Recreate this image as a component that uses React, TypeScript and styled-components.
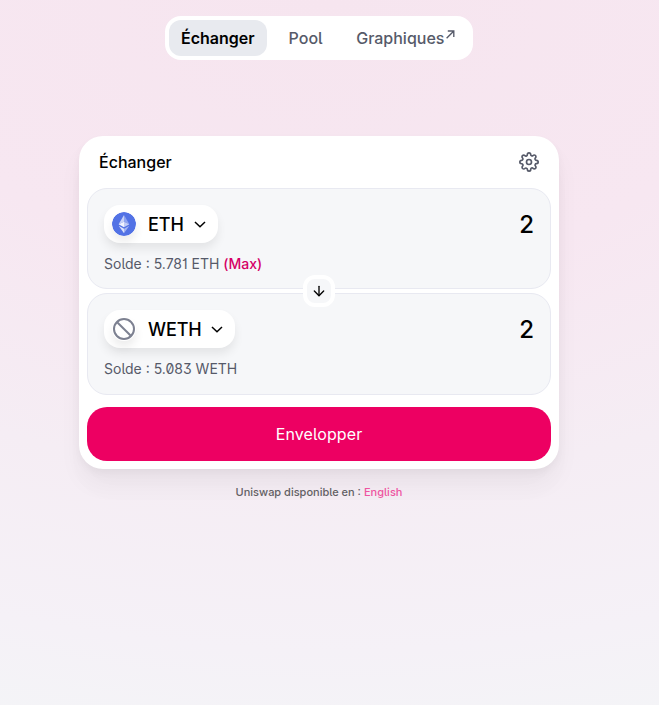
import React from 'react';
import styled, { createGlobalStyle } from 'styled-components';
import { FiSettings, FiArrowDown } from 'react-icons/fi';

const GlobalStyle = createGlobalStyle`
  * { box-sizing: border-box; }
  body {
    margin: 0;
    font-family: Inter, sans-serif;
    font-size: 16px;
    font-feature-settings: 'ss01' on, 'ss02' on, 'cv01' on, 'cv03' on;
    -webkit-font-smoothing: antialiased;
    color: #000;
    background: #f7f8fa;
  }
`;

const Page = styled.div`
  display: flex;
  flex-direction: column;
  align-items: center;
  height: 705px;
  padding: 16px 21px 0 0;
  overflow: hidden;
  background: radial-gradient(1150px 740px at 50% 0, #f6e5ef 0%, #f7e7f1 38%, #f5edf4 65%, #f5f1f7 88%, #f4f4f7 100%);
`;

const Nav = styled.nav`
  display: flex;
  gap: 10px;
  width: 308px;
  height: 44px;
  padding: 4px;
  border-radius: 16px;
  background: #fff;
`;

const NavLink = styled.a<{ $active?: boolean }>`
  display: flex;
  align-items: center;
  height: 36px;
  padding: 0 12px;
  border-radius: 12px;
  font-size: 16px;
  font-weight: ${p => (p.$active ? 600 : 500)};
  color: ${p => (p.$active ? '#000' : '#565a69')};
  background: ${p => (p.$active ? '#e8eaef' : 'transparent')};
  white-space: nowrap;
  &:last-child { margin-left: -0.5px; }
`;

const ExternalArrow = styled.svg`
  width: 9px;
  height: 9px;
  margin: -7px 0 0 2px;
  flex: none;
`;

const Card = styled.main`
  display: flex;
  flex-direction: column;
  width: 480px;
  height: 333px;
  margin-top: 76px;
  padding: 0 8px 8px;
  border-radius: 24px;
  background: #fff;
  box-shadow: 0 0 1px rgba(0, 0, 0, 0.01), 0 4px 8px rgba(0, 0, 0, 0.04), 0 16px 24px rgba(0, 0, 0, 0.04), 0 24px 32px rgba(0, 0, 0, 0.01);
`;

const CardHeader = styled.header`
  display: flex;
  align-items: center;
  justify-content: space-between;
  height: 52px;
  padding: 0 12px;
  font-weight: 500;
  color: #000;
  svg { color: #565a69; }
`;

const Panels = styled.div`
  position: relative;
  display: grid;
  grid-template-rows: 101px 102px;
  gap: 4px;
`;

const Panel = styled.section`
  display: flex;
  flex-direction: column;
  padding: 16px;
  border: 1px solid #e8e9f1;
  border-radius: 20px;
  background: #f6f7f9;
`;

const PanelRow = styled.div`
  display: flex;
  align-items: center;
  justify-content: space-between;
  height: 38px;
`;

const TokenButton = styled.button<{ $width: number }>`
  display: flex;
  align-items: center;
  width: ${p => p.$width}px;
  height: 38px;
  padding: 0 8px;
  border: 0;
  border-radius: 16px;
  background: #fff;
  box-shadow: 0 6px 10px rgba(0, 0, 0, 0.075);
  font: inherit;
  font-feature-settings: inherit;
  color: #000;
`;

const TokenIcon = styled.svg`
  width: 24px;
  height: 24px;
  flex: none;
  border-radius: 50%;
  box-shadow: 0 6px 10px rgba(0, 0, 0, 0.075);
`;

const TokenName = styled.span`
  margin-left: 12px;
  font-size: 18px;
  font-weight: 500;
  letter-spacing: -0.1px;
`;

const Chevron = styled.svg`
  width: 12px;
  height: 7px;
  margin: 1px 4px 0 auto;
`;

const Amount = styled.span`
  font-size: 24px;
  font-weight: 500;
`;

const Balance = styled.div`
  margin-top: 12px;
  font-size: 14px;
  line-height: 17px;
  color: #565a69;
`;

const Max = styled.span`
  font-weight: 500;
  color: #d50066;
`;

const SwitchButton = styled.div`
  position: absolute;
  top: 87px;
  left: 216px;
  display: flex;
  align-items: center;
  justify-content: center;
  width: 32px;
  height: 32px;
  border: 4px solid #fff;
  border-radius: 12px;
  background: #f6f7f9;
`;

const Wrap = styled.button`
  height: 54px;
  margin-top: 12px;
  border: 0;
  border-radius: 20px;
  background: #ed0062;
  color: #fff;
  font: 400 16px Inter, sans-serif;
  font-feature-settings: inherit;
  letter-spacing: 0.1px;
`;

const Locale = styled.footer`
  margin-top: 16px;
  font-size: 11px;
  line-height: 14px;
  font-weight: 500;
  color: #626064;
`;

const LocaleLink = styled.a`
  color: #ee54a0;
`;

const ChevronDown = () => (
  <Chevron viewBox="0 0 12 7" fill="none">
    <path d="M.97 1 6 5.83 11 1" stroke="#000" strokeWidth="1.5" />
  </Chevron>
);

const EthIcon = () => (
  <TokenIcon viewBox="0 0 24 24">
    <circle cx="12" cy="12" r="12" fill="#5272e5" />
    <path d="M12 3 6.6 12.2 12 9.7Z" fill="#c8d2f7" />
    <path d="M12 3v6.7l5.4 2.5Z" fill="#8fa3ef" />
    <path d="M6.6 12.2 12 9.7v5.6Z" fill="#f2f4fe" />
    <path d="M17.4 12.2 12 9.7v5.6Z" fill="#c1ccf6" />
    <path d="M6.7 13.7 12 16.7v4.5Z" fill="#dce3fb" />
    <path d="M17.3 13.7 12 16.7v4.5Z" fill="#a3b3f1" />
  </TokenIcon>
);

const MissingIcon = () => (
  <TokenIcon viewBox="0 0 24 24" fill="none" stroke="#7d8191" strokeWidth="2">
    <circle cx="12" cy="12" r="10" />
    <path d="m4.93 4.93 14.14 14.14" />
  </TokenIcon>
);

export default function App() {
  return (
    <>
      <GlobalStyle />
      <Page>
        <Nav>
          <NavLink $active>Échanger</NavLink>
          <NavLink>Pool</NavLink>
          <NavLink>
            Graphiques
            <ExternalArrow viewBox="0 0 9 9" fill="none" stroke="currentColor" strokeWidth="1.35">
              <path d="M.6 8.2 7.6 1.2M1.8 1h6v6" />
            </ExternalArrow>
          </NavLink>
        </Nav>
        <Card>
          <CardHeader>
            Échanger
            <FiSettings size={20} />
          </CardHeader>
          <Panels>
            <Panel>
              <PanelRow>
                <TokenButton $width={114}>
                  <EthIcon />
                  <TokenName>ETH</TokenName>
                  <ChevronDown />
                </TokenButton>
                <Amount>2</Amount>
              </PanelRow>
              <Balance>Solde : 5.781 ETH <Max>(Max)</Max></Balance>
            </Panel>
            <Panel>
              <PanelRow>
                <TokenButton $width={131}>
                  <MissingIcon />
                  <TokenName>WETH</TokenName>
                  <ChevronDown />
                </TokenButton>
                <Amount>2</Amount>
              </PanelRow>
              <Balance>Solde : 5.083 WETH</Balance>
            </Panel>
            <SwitchButton>
              <FiArrowDown size={16} />
            </SwitchButton>
          </Panels>
          <Wrap>Envelopper</Wrap>
        </Card>
        <Locale>Uniswap disponible en : <LocaleLink>English</LocaleLink></Locale>
      </Page>
    </>
  );
}
